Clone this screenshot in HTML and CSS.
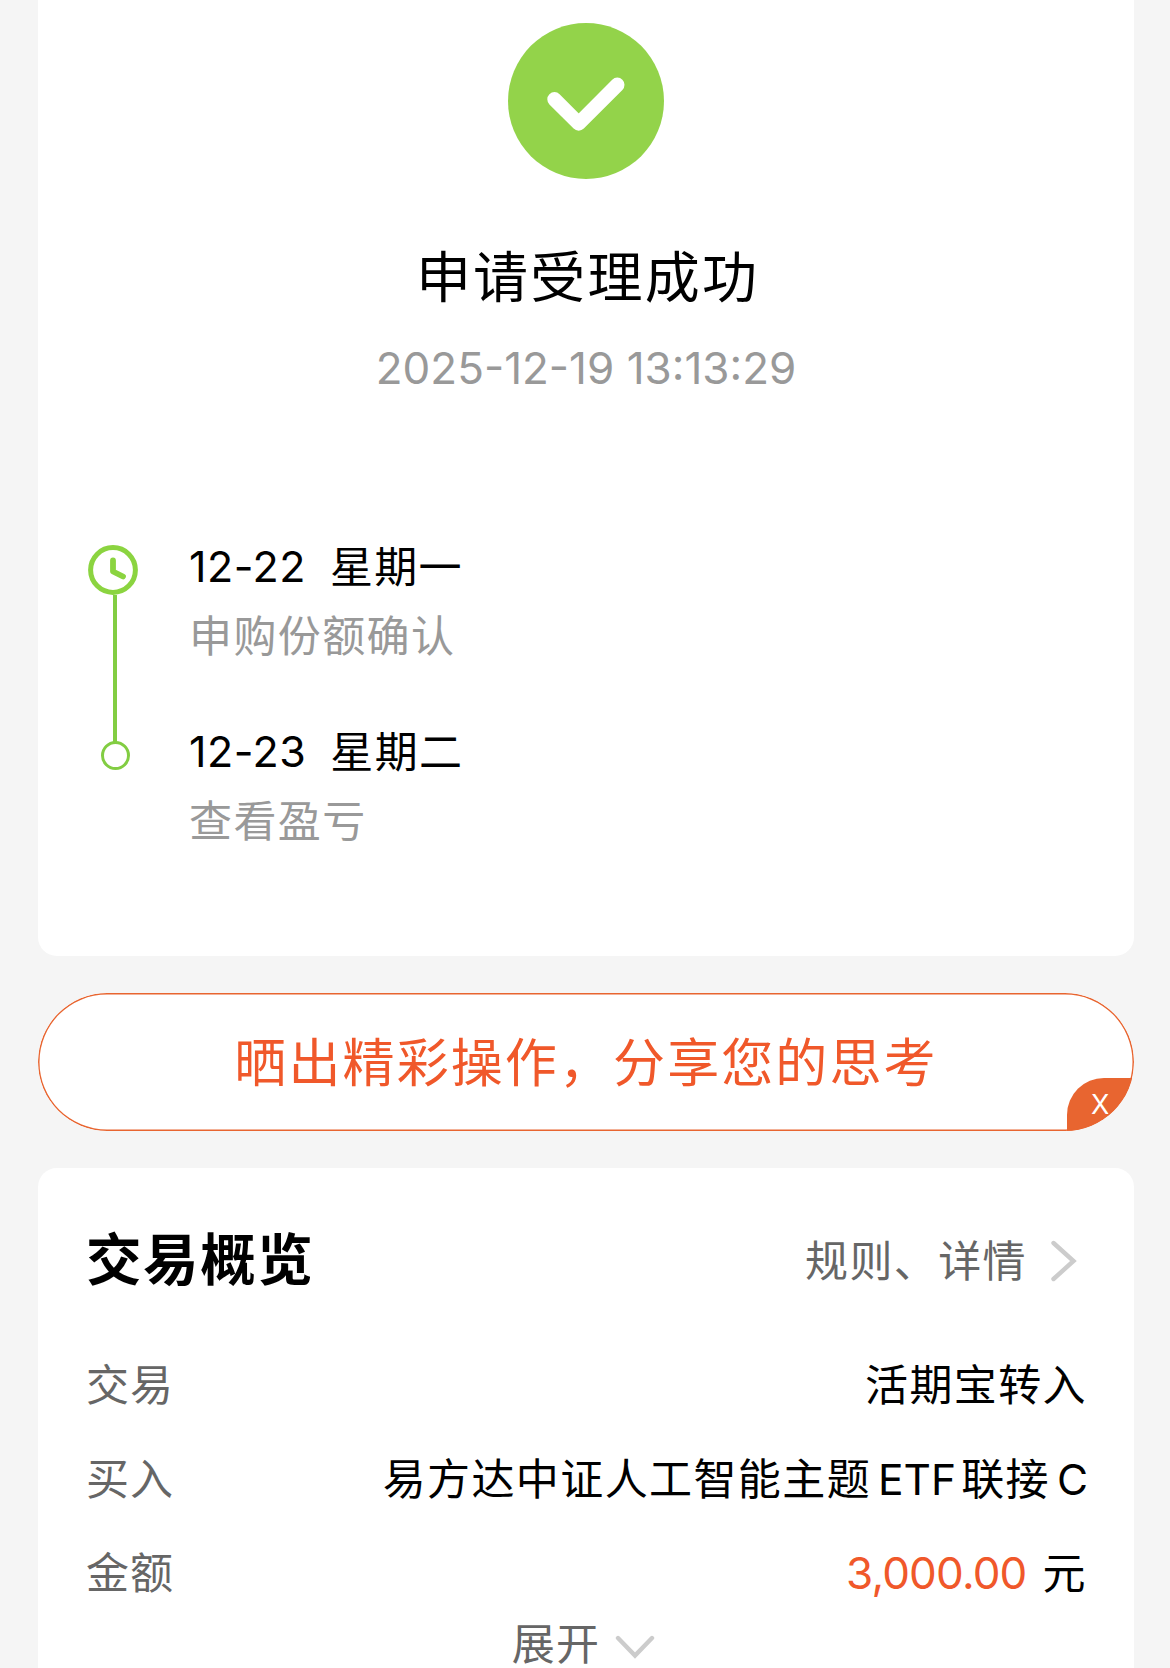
FILE: index.html
```
<!DOCTYPE html>
<html lang="zh-CN">
<head>
    <meta charset="utf-8">
    <title>交易结果</title>
    <link rel="stylesheet" href="styles.css">
</head>
<body>
<div class="page">
    <div class="card result">
        <svg class="result_icon" viewBox="0 0 156 156">
            <circle cx="78" cy="78" r="78" fill="#93d34a"/>
            <path d="M46.5 76.3 70.7 100.5 109.3 61.8" fill="none" stroke="#fff" stroke-width="14.4" stroke-linecap="round" stroke-linejoin="round"/>
        </svg>
        <div class="result_title">申请受理成功</div>
        <div class="result_time">2025-12-19 13:13:29</div>

        <div class="steps">
            <div class="step">
                <div class="step_mark">
                    <svg class="clock" viewBox="0 0 50 50">
                        <circle cx="25" cy="25" r="22.4" fill="none" stroke="#8bd440" stroke-width="5"/>
                        <path d="M25 15.5V26.5L35 31.5" fill="none" stroke="#8bd440" stroke-width="5.8" stroke-linecap="round" stroke-linejoin="round"/>
                    </svg>
                    <div class="line"></div>
                </div>
                <div class="step_body">
                    <div class="step_date"><span class="num">12-22</span><span class="week">星期一</span></div>
                    <div class="step_text">申购份额确认</div>
                </div>
            </div>
            <div class="step">
                <div class="step_mark">
                    <div class="dot"></div>
                </div>
                <div class="step_body">
                    <div class="step_date"><span class="num">12-23</span><span class="week">星期二</span></div>
                    <div class="step_text">查看盈亏</div>
                </div>
            </div>
        </div>
    </div>

    <div class="share">
        <span class="share_text">晒出精彩操作，分享您的思考</span>
        <span class="share_close">X</span>
    </div>

    <div class="card overview">
        <div class="overview_head">
            <div class="overview_title">交易概览</div>
            <div class="overview_link">
                <span class="link_text">规则、详情</span>
                <svg class="arrow_right" viewBox="0 0 26 42">
                    <path d="M2.5 3 22.5 21 2.5 39" fill="none" stroke="#ccc" stroke-width="4.4" stroke-linecap="round"/>
                </svg>
            </div>
        </div>
        <div class="row">
            <span class="label">交易</span>
            <span class="value">活期宝转入</span>
        </div>
        <div class="row">
            <span class="label">买入</span>
            <span class="value">易方达中证人工智能主题<span class="latin">ETF</span>联接<span class="latin last">C</span></span>
        </div>
        <div class="row">
            <span class="label">金额</span>
            <span class="value amount"><span class="money">3,000.00</span><span>元</span></span>
        </div>
        <div class="more">
            <span>展开</span>
            <svg class="arrow_down" viewBox="0 0 40 24">
                <path d="M3 3 20 20.5 37 3" fill="none" stroke="#ccc" stroke-width="4.4" stroke-linecap="round"/>
            </svg>
        </div>
    </div>
</div>
</body>
</html>
```
FILE: styles.css
```
* {
    box-sizing: border-box;
}

body {
    margin: 0;
    background-color: #f5f5f5;
    color: #000;
    font-family: Inter, "Noto Sans CJK SC", sans-serif;
    font-size: 43px;
}

svg {
    display: block;
    flex: none;
}

.page {
    padding: 0 36px 0 38px;
}

.card {
    background-color: #fff;
    padding: 0 48px;
}

.result {
    height: 956px;
    padding-top: 23px;
    border-radius: 0 0 19px 19px;
}

.result_icon {
    width: 156px;
    height: 156px;
    margin: 0 auto;
}

.result_title {
    margin-top: 58px;
    padding-left: 3px;
    height: 80px;
    line-height: 80px;
    font-size: 55px;
    letter-spacing: 2.2px;
    text-align: center;
    white-space: nowrap;
}

.result_time {
    margin-top: 21px;
    line-height: 60px;
    font-size: 44px;
    color: #999;
    text-align: center;
    white-space: nowrap;
}

.steps {
    margin-top: 135px;
}

.step {
    display: flex;
    height: 185px;
}

.step_mark {
    display: flex;
    flex-direction: column;
    align-items: center;
    width: 58px;
    margin-right: 45px;
    padding-top: 12px;
}

.clock {
    width: 50px;
    height: 50px;
    margin-left: -4px;
}

.line {
    flex: none;
    width: 4px;
    height: 147px;
    background-color: #82cd42;
}

.dot {
    width: 29px;
    height: 29px;
    margin-top: 11px;
    border: 3px solid #82cd42;
    border-radius: 50%;
}

.step_date {
    display: flex;
    gap: 24px;
    height: 68px;
    line-height: 66px;
}

.num {
    letter-spacing: 0.5px;
}

.week {
    line-height: 69px;
    letter-spacing: 1.3px;
}

.step_text {
    height: 68px;
    line-height: 70px;
    letter-spacing: 1.4px;
    color: #999;
}

.share {
    position: relative;
    display: flex;
    justify-content: center;
    height: 138px;
    margin: 37px 0;
    overflow: hidden;
    border-radius: 69px;
    background-color: #fff;
    color: #f0582a;
}

/* thin outline drawn over the close corner */
.share::after {
    content: "";
    position: absolute;
    inset: 0;
    border-radius: 69px;
    box-shadow: inset 0 0 0 1.5px #e86530;
}

.share_text {
    line-height: 141px;
    font-size: 52px;
    letter-spacing: 2.1px;
    white-space: nowrap;
}

/* close corner, clipped by the pill */
.share_close {
    position: absolute;
    right: 0;
    bottom: 0;
    width: 67px;
    height: 53px;
    padding-left: 24px;
    line-height: 53px;
    border-top-left-radius: 37px;
    background-color: #e86530;
    color: #fff;
    font-size: 27px;
}

.overview {
    height: 500px;
    padding-top: 52px;
    border-radius: 19px 19px 0 0;
}

.overview_head {
    display: flex;
    justify-content: space-between;
    align-items: center;
    height: 80px;
    margin-bottom: 38px;
}

.overview_title {
    font-size: 55.5px;
    font-weight: bold;
    letter-spacing: 1.6px;
    line-height: 80px;
}

.overview_link {
    display: flex;
    align-items: center;
    gap: 24px;
    padding-right: 9px;
    color: #666;
    letter-spacing: 1.4px;
}

.link_text {
    margin-top: -5px;
}

.arrow_right {
    width: 26px;
    height: 42px;
    margin-top: 2px;
}

.row {
    display: flex;
    justify-content: space-between;
    height: 94px;
    line-height: 94px;
    letter-spacing: 1.4px;
    white-space: nowrap;
}

.label {
    letter-spacing: 1px;
    color: #666;
}

.value {
    margin-right: -1px;
}

.latin {
    margin: 0 5px 0 7px;
    font-size: 42.5px;
    letter-spacing: 0;
}

.last {
    margin-right: -1px;
}

.amount {
    display: flex;
}

.money {
    margin-right: 16px;
    font-size: 44px;
    letter-spacing: -0.8px;
    color: #f0582a;
}

.more {
    display: flex;
    justify-content: center;
    align-items: center;
    gap: 15px;
    height: 44px;
    margin-right: 5px;
    line-height: 46px;
    color: #666;
    letter-spacing: 1.2px;
}

.more span {
    margin-top: 3px;
}

.arrow_down {
    width: 40px;
    height: 24px;
    margin-top: 9px;
}
```
